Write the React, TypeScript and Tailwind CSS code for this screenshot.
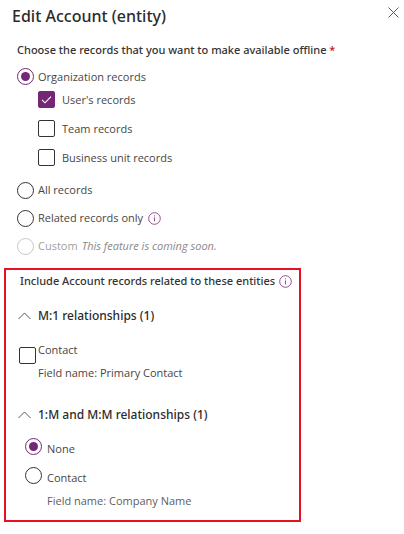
import { useState } from "react";
import type { ReactNode } from "react";

const radioClass =
  "grid size-[17px] shrink-0 appearance-none place-content-center rounded-full border border-[#333333] bg-white before:size-[9px] before:rounded-full checked:border-[#742774] checked:before:bg-[#742774] disabled:border-[#c8c6c4]";

function InfoButton({ label }: { label: string }) {
  return (
    <button type="button" aria-label={label} className="shrink-0 text-[#8a3c8a]">
      <svg width="13" height="13" viewBox="0 0 13 13" fill="none" stroke="currentColor">
        <circle cx="6.5" cy="6.5" r="5.8" strokeWidth="0.9" />
        <path d="M6.5 5.4v4M6.5 3.4v1" strokeWidth="0.9" />
      </svg>
    </button>
  );
}

function CheckBox({ id, defaultChecked = false }: { id: string; defaultChecked?: boolean }) {
  return (
    <span className="relative block size-[17px] shrink-0">
      <input
        id={id}
        type="checkbox"
        defaultChecked={defaultChecked}
        className="peer block size-full appearance-none rounded-xs border border-[#333333] bg-white checked:border-[#742774] checked:bg-[#742774]"
      />
      <svg
        viewBox="0 0 17 17"
        fill="none"
        stroke="white"
        strokeWidth="1.1"
        className="pointer-events-none invisible absolute inset-0 peer-checked:visible"
      >
        <path d="M4 8.8l3 3 6-6.2" />
      </svg>
    </span>
  );
}

function SectionHeading({ open, onToggle, children }: { open: boolean; onToggle: () => void; children: ReactNode }) {
  return (
    <h2 className="h-6 font-['Noto_Sans',sans-serif] text-[12px] font-medium text-[#2b2b2b]">
      <button type="button" aria-expanded={open} onClick={onToggle} className="flex h-6 items-center gap-[7px] whitespace-nowrap">
        <svg
          width="13"
          height="8"
          viewBox="0 0 13 8"
          fill="none"
          stroke="#444444"
          strokeWidth="0.9"
          className={open ? "" : "rotate-180"}
        >
          <path d="M0.5 7l6-6 6 6" />
        </svg>
        {children}
      </button>
    </h2>
  );
}

const ownership = [
  { id: "user", label: "User's records", checked: true },
  { id: "team", label: "Team records", checked: false },
  { id: "unit", label: "Business unit records", checked: false },
];

export default function App() {
  const [scope, setScope] = useState("organization");
  const [related, setRelated] = useState("none");
  const [oneOpen, setOneOpen] = useState(true);
  const [manyOpen, setManyOpen] = useState(true);

  return (
    <main className="min-h-screen bg-white font-['Open_Sans','Noto_Sans',sans-serif] text-[11px] leading-5 text-[#484644]">
      <header className="flex h-8 items-center justify-between pr-[5px] pl-3">
        <h1 className="font-['Noto_Sans',sans-serif] text-[16px] font-medium whitespace-nowrap text-[#2b2b2b]">
          Edit Account (entity)
        </h1>
        <button type="button" aria-label="Close" className="mb-2 text-[#8a3c8a]">
          <svg width="11" height="11" viewBox="0 0 11 11" fill="none" stroke="currentColor" strokeWidth="1">
            <path d="M0.5 0.5l10 10M10.5 0.5l-10 10" />
          </svg>
        </button>
      </header>

      <fieldset className="mt-2 pl-[17px]">
        <legend className="font-['Noto_Sans',sans-serif] font-medium whitespace-nowrap text-[#333333]">
          Choose the records that you want to make available offline <span className="text-[#c50f1f]">*</span>
        </legend>

        <label className="mt-2 flex h-[17px] items-center gap-1">
          <input
            type="radio"
            name="scope"
            checked={scope === "organization"}
            onChange={() => setScope("organization")}
            className={radioClass}
          />
          Organization records
        </label>

        <div className="pl-[21px]">
          {ownership.map((item) => (
            <label key={item.id} htmlFor={item.id} className="flex h-[29px] items-center gap-[7px]">
              <CheckBox id={item.id} defaultChecked={item.checked} />
              {item.label}
            </label>
          ))}
        </div>

        <label className="mt-1 flex h-7 items-center gap-1">
          <input type="radio" name="scope" checked={scope === "all"} onChange={() => setScope("all")} className={radioClass} />
          All records
        </label>
        <div className="flex h-7 items-center gap-[5px]">
          <label className="flex items-center gap-1">
            <input
              type="radio"
              name="scope"
              checked={scope === "related"}
              onChange={() => setScope("related")}
              className={radioClass}
            />
            Related records only
          </label>
          <InfoButton label="About related records" />
        </div>
        <label className="flex h-7 items-center gap-1 text-[#a19f9d]">
          <input type="radio" name="scope" disabled className={radioClass} />
          Custom <em className="text-[#8a8886]">This feature is coming soon.</em>
        </label>
      </fieldset>

      <section className="mx-1 mt-2 w-[297px] max-w-full border-2 border-[#e81123] px-3 pt-px pb-[9px]">
        <div className="flex h-5 items-center gap-1 pl-0.5">
          <h2 className="font-['Noto_Sans',sans-serif] font-medium whitespace-nowrap text-[#333333]">
            Include Account records related to these entities
          </h2>
          <InfoButton label="About related entities" />
        </div>

        <div className="mt-[13px]">
          <SectionHeading open={oneOpen} onToggle={() => setOneOpen(!oneOpen)}>
            M:1 relationships (1)
          </SectionHeading>
          {oneOpen && (
            <div className="mt-3 flex items-start gap-0.5 pl-px">
              <div className="pt-[7px]">
                <CheckBox id="contact" />
              </div>
              <label htmlFor="contact" className="flex flex-col gap-[3px]">
                <span>Contact</span>
                <span>Field name: Primary Contact</span>
              </label>
            </div>
          )}
        </div>

        <div className="mt-5">
          <SectionHeading open={manyOpen} onToggle={() => setManyOpen(!manyOpen)}>
            1:M and M:M relationships (1)
          </SectionHeading>
          {manyOpen && (
            <div className="mt-[11px] flex flex-col gap-2 pl-[7px]">
              <label className="flex items-start gap-[5px]">
                <input
                  type="radio"
                  name="related"
                  checked={related === "none"}
                  onChange={() => setRelated("none")}
                  className={radioClass}
                />
                <span className="pt-px">None</span>
              </label>
              <label className="flex items-start gap-[5px]">
                <input
                  type="radio"
                  name="related"
                  checked={related === "contact"}
                  onChange={() => setRelated("contact")}
                  className={radioClass}
                />
                <span className="flex flex-col gap-[3px] pt-px">
                  <span>Contact</span>
                  <span className="text-[#605e5c]">Field name: Company Name</span>
                </span>
              </label>
            </div>
          )}
        </div>
      </section>
    </main>
  );
}
